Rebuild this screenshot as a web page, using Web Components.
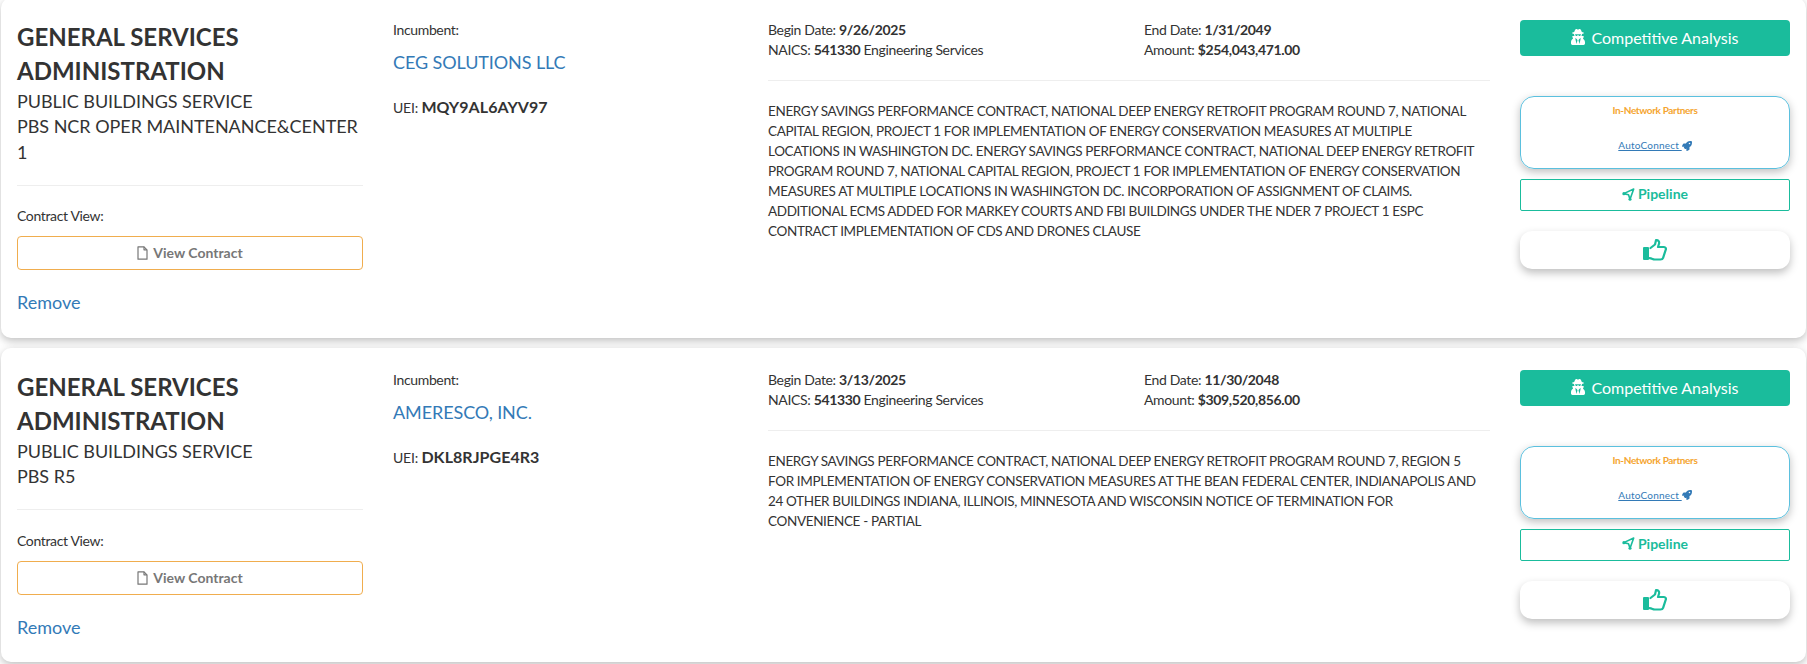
<!DOCTYPE html>
<html>
<head>
<meta charset="utf-8">
<title>Contracts</title>
<style>
    html, body {
        margin: 0;
        height: 664px;
        overflow: hidden;
        background: #fff;
        font-family: Lato, "Liberation Sans", sans-serif;
        color: #333;
    }
    contract-list {
        margin-top: -2px;
    }
</style>
</head>
<body>
<contract-list>
    <contract-card agency="GENERAL SERVICES ADMINISTRATION" incumbent="CEG SOLUTIONS LLC" uei="MQY9AL6AYV97"
        begin="9/26/2025" end="1/31/2049" naics="541330" amount="$254,043,471.00">
        <span slot="office">PUBLIC BUILDINGS SERVICE</span>
        <span slot="office">PBS NCR OPER MAINTENANCE&amp;CENTER 1</span>
        ENERGY SAVINGS PERFORMANCE CONTRACT, NATIONAL DEEP ENERGY RETROFIT PROGRAM ROUND 7, NATIONAL CAPITAL REGION, PROJECT 1 FOR IMPLEMENTATION OF ENERGY CONSERVATION MEASURES AT MULTIPLE LOCATIONS IN WASHINGTON DC. ENERGY SAVINGS PERFORMANCE CONTRACT, NATIONAL DEEP ENERGY RETROFIT PROGRAM ROUND 7, NATIONAL CAPITAL REGION, PROJECT 1 FOR IMPLEMENTATION OF ENERGY CONSERVATION MEASURES AT MULTIPLE LOCATIONS IN WASHINGTON DC. INCORPORATION OF ASSIGNMENT OF CLAIMS. ADDITIONAL ECMS ADDED FOR MARKEY COURTS AND FBI BUILDINGS UNDER THE NDER 7 PROJECT 1 ESPC CONTRACT IMPLEMENTATION OF CDS AND DRONES CLAUSE
    </contract-card>
    <contract-card agency="GENERAL SERVICES ADMINISTRATION" incumbent="AMERESCO, INC." uei="DKL8RJPGE4R3"
        begin="3/13/2025" end="11/30/2048" naics="541330" amount="$309,520,856.00">
        <span slot="office">PUBLIC BUILDINGS SERVICE</span>
        <span slot="office">PBS R5</span>
        ENERGY SAVINGS PERFORMANCE CONTRACT, NATIONAL DEEP ENERGY RETROFIT PROGRAM ROUND 7, REGION 5 FOR IMPLEMENTATION OF ENERGY CONSERVATION MEASURES AT THE BEAN FEDERAL CENTER, INDIANAPOLIS AND 24 OTHER BUILDINGS INDIANA, ILLINOIS, MINNESOTA AND WISCONSIN NOTICE OF TERMINATION FOR CONVENIENCE - PARTIAL
    </contract-card>
</contract-list>

<template id="card-template">
    <style>
        :host {
            display: block;
            background: #fff;
            border-radius: 10px;
            box-shadow: 0 3px 8px rgba(0, 0, 0, 0.25);
            margin: 0 1px;
            padding: 22px 16px 22px 16px;
            font-size: 14px;
            line-height: 20px;
            letter-spacing: -0.35px;
            color: #333;
        }
        .row {
            display: grid;
            grid-template-columns: 346px 345px 722px 270px;
            column-gap: 30px;
        }
        h2 {
            margin: 0;
            font-size: 24px;
            font-weight: 700;
            line-height: 34.3px;
            letter-spacing: 0;
        }
        .office {
            font-size: 18px;
            line-height: 25.7px;
            letter-spacing: -0.04px;
        }
        .office ::slotted(span) {
            display: block;
        }
        hr {
            border: 0;
            border-top: 1px solid #eee;
            margin: 0;
        }
        .left hr {
            margin: 19px 0 20.7px;
        }
        .contract-label {
            margin-bottom: 10px;
        }
        a {
            color: #337ab7;
            text-decoration: none;
        }
        .remove {
            display: block;
            font-size: 18px;
            line-height: 25.7px;
            margin-top: 20px;
            letter-spacing: 0;
        }
        .incumbent {
            display: block;
            font-size: 18px;
            line-height: 25.7px;
            margin-top: 10px;
            letter-spacing: -0.1px;
        }
        .uei {
            margin-top: 21px;
            letter-spacing: -0.2px;
        }
        .uei b {
            font-size: 16px;
            letter-spacing: 0.05px;
        }
        .dates {
            display: grid;
            grid-template-columns: 376px 1fr;
            height: 60px;
        }
        .desc {
            margin-top: 20px;
            max-width: 714px;
            font-size: 13.5px;
        }
        .actions {
            display: flex;
            flex-direction: column;
            letter-spacing: 0;
        }
        b {
            font-weight: 700;
        }
    </style>
    <div class="row">
        <div class="left">
            <h2 id="agency"></h2>
            <div class="office"><slot name="office"></slot></div>
            <hr>
            <div class="contract-label">Contract View:</div>
            <view-button>View Contract</view-button>
            <a class="remove" href="#">Remove</a>
        </div>
        <div>
            <div>Incumbent:</div>
            <a class="incumbent" id="incumbent" href="#"></a>
            <div class="uei">UEI: <b id="uei"></b></div>
        </div>
        <div>
            <div class="dates">
                <div>Begin Date: <b id="begin"></b><br>NAICS: <b id="naics"></b> Engineering Services</div>
                <div>End Date: <b id="end"></b><br>Amount: <b id="amount"></b></div>
            </div>
            <hr>
            <div class="desc"><slot></slot></div>
        </div>
        <div class="actions">
            <analysis-button>Competitive Analysis</analysis-button>
            <partner-box></partner-box>
            <pipeline-button>Pipeline</pipeline-button>
            <like-button></like-button>
        </div>
    </div>
</template>

<script>
    class ContractList extends HTMLElement {
        constructor() {
            super();
            this.attachShadow({ mode: "open" });
            this.shadowRoot.innerHTML = `
                <style>
                    :host {
                        display: flex;
                        flex-direction: column;
                        gap: 9.9px;
                    }
                </style>
                <slot></slot>
            `;
        }
    }

    class ContractCard extends HTMLElement {
        constructor() {
            super();
            this.attachShadow({ mode: "open" });
            const template = document.getElementById("card-template");
            this.shadowRoot.appendChild(template.content.cloneNode(true));
        }
        connectedCallback() {
            ["agency", "incumbent", "uei", "begin", "end", "naics", "amount"].forEach(name => {
                this.shadowRoot.getElementById(name).textContent = this.getAttribute(name);
            });
        }
    }

    class ViewButton extends HTMLElement {
        constructor() {
            super();
            this.attachShadow({ mode: "open" });
            this.shadowRoot.innerHTML = `
                <style>
                    :host {
                        display: flex;
                        justify-content: center;
                        align-items: center;
                        gap: 5px;
                        height: 34px;
                        box-sizing: border-box;
                        border: 1px solid #f0ad4e;
                        border-radius: 4px;
                        color: #777;
                        font-weight: 700;
                        font-size: 14px;
                        letter-spacing: 0;
                    }
                    svg { width: 11px; height: 14px; }
                </style>
                <svg viewBox="0 0 11 14" fill="none" stroke="#777" stroke-width="1.2" stroke-linejoin="round">
                    <path d="M1 .8h6l3 3v9.4H1z"/><path d="M7 .8v3h3"/>
                </svg>
                <slot></slot>
            `;
        }
    }

    class AnalysisButton extends HTMLElement {
        constructor() {
            super();
            this.attachShadow({ mode: "open" });
            this.shadowRoot.innerHTML = `
                <style>
                    :host {
                        display: flex;
                        justify-content: center;
                        align-items: center;
                        gap: 6px;
                        height: 36px;
                        background: #1abc9c;
                        border-radius: 4px;
                        color: #fff;
                        font-size: 16px;
                    }
                    svg { width: 14px; height: 16px; margin-top: -2px; }
                </style>
                <svg viewBox="0 0 448 512" fill="#fff">
                    <path d="M383.9 308.3l23.9-62.6c4-10.5-3.7-21.7-15-21.7h-58.5c11-18.9 17.8-40.6 17.8-64v-.3c39.2-7.8 64-19.1 64-31.7 0-13.3-27.3-25.1-70.1-33-9.2-32.8-27-65.8-40.6-82.8-9.5-11.9-25.9-15.6-39.5-8.8l-27.6 13.8c-9 4.5-19.6 4.5-28.6 0L182.1 3.4c-13.6-6.8-30-3.1-39.5 8.8-13.5 17-31.4 50-40.6 82.8-42.7 7.9-70 19.7-70 33 0 12.6 24.8 23.9 64 31.7v.3c0 23.4 6.8 45.1 17.8 64H56.3c-11.5 0-19.2 11.7-14.7 22.3l25.8 60.2C27.3 329.8 0 372.7 0 422.4v44.8C0 491.9 20.1 512 44.8 512h358.4c24.7 0 44.8-20.1 44.8-44.8v-44.8c0-48.4-25.8-90.4-64.1-114.1zM176 480l-41.6-192 49.6 32 24 40-32 120zm96 0l-32-120 24-40 49.6-32L272 480zm41.7-298.5c-3.9 11.9-7 24.6-16.5 33.4-10.1 9.3-48 22.4-64-25-2.8-8.4-15.4-8.4-18.3 0-17 50.2-56 32.4-64 25-9.5-8.8-12.7-21.5-16.5-33.4-.8-2.5-6.3-5.7-6.3-5.8v-10.8c28.3 3.6 61 5.8 96 5.8s67.7-2.1 96-5.8v10.8c-.1.1-5.6 3.2-6.4 5.8z"/>
                </svg>
                <slot></slot>
            `;
        }
    }

    class PartnerBox extends HTMLElement {
        constructor() {
            super();
            this.attachShadow({ mode: "open" });
            this.shadowRoot.innerHTML = `
                <style>
                    :host {
                        display: block;
                        box-sizing: border-box;
                        height: 73px;
                        margin-top: 40px;
                        padding-top: 6px;
                        border: 1px solid #5bc0de;
                        border-radius: 14px;
                        box-shadow: 0 3px 8px rgba(0, 0, 0, 0.25);
                        text-align: center;
                        font-size: 10px;
                        line-height: 15px;
                    }
                    .title {
                        color: #f5a52f;
                        font-weight: 700;
                        letter-spacing: -0.35px;
                    }
                    .connect {
                        margin-top: 20px;
                        display: flex;
                        justify-content: center;
                        align-items: center;
                    }
                    a {
                        color: #337ab7;
                        font-weight: 400;
                        letter-spacing: 0.2px;
                        white-space: pre;
                    }
                    svg { width: 10px; height: 10px; }
                </style>
                <div class="title">In-Network Partners</div>
                <div class="connect">
                    <a href="#">AutoConnect </a>
                    <svg viewBox="0 0 512 512" fill="#337ab7">
                        <path d="M505.12019,19.09375c-1.18945-5.53125-6.65819-11-12.207-12.1875C460.716,0,435.507,0,410.40747,0,307.17523,0,245.26909,55.20312,199.05238,128H94.83772c-16.34763.01562-35.55658,11.875-42.88664,26.48438L2.51562,253.29688A28.4,28.4,0,0,0,0,264a24.00867,24.00867,0,0,0,24.00582,24H127.81618l-22.47457,22.46875c-11.36521,11.36133-12.99607,32.25781,0,45.25L156.24582,406.625c11.15623,11.1875,32.15619,13.15625,45.27726,0l22.47457-22.46875V488a24.00867,24.00867,0,0,0,24.00581,24,28.55934,28.55934,0,0,0,10.707-2.51562l98.72834-49.39063c14.62888-7.29687,26.50776-26.5,26.50776-42.85937V312.79688c72.59753-46.3125,128.03493-108.40626,128.03493-211.09376C512.07526,76.5,512.07526,51.29688,505.12019,19.09375ZM384.04033,168A40,40,0,1,1,424.05,128,40.02322,40.02322,0,0,1,384.04033,168Z"/>
                    </svg>
                </div>
            `;
        }
    }

    class PipelineButton extends HTMLElement {
        constructor() {
            super();
            this.attachShadow({ mode: "open" });
            this.shadowRoot.innerHTML = `
                <style>
                    :host {
                        display: flex;
                        justify-content: center;
                        align-items: center;
                        gap: 3px;
                        box-sizing: border-box;
                        height: 32px;
                        margin-top: 10px;
                        padding-bottom: 2px;
                        border: 1px solid #1abc9c;
                        border-radius: 2px;
                        color: #1abc9c;
                        font-weight: 700;
                        font-size: 14px;
                    }
                    svg { width: 13px; height: 13px; }
                </style>
                <svg viewBox="0 0 12 12" fill="#1abc9c" stroke="#1abc9c">
                    <path d="M1.6 5.2 10.8 1 7.4 10.4 6 6.2z" fill="none" stroke-width="1.5" stroke-linejoin="round"/>
                    <circle cx="1.7" cy="5.2" r="1.4" stroke="none"/>
                    <circle cx="7.4" cy="10.3" r="1.4" stroke="none"/>
                </svg>
                <slot></slot>
            `;
        }
    }

    class LikeButton extends HTMLElement {
        constructor() {
            super();
            this.attachShadow({ mode: "open" });
            this.shadowRoot.innerHTML = `
                <style>
                    :host {
                        display: flex;
                        justify-content: center;
                        align-items: center;
                        height: 38px;
                        margin-top: 20px;
                        border-radius: 12px;
                        box-shadow: 0 4px 8px rgba(0, 0, 0, 0.25);
                    }
                    svg { width: 24px; height: 22px; }
                </style>
                <svg viewBox="0 0 24 22" fill="none" stroke="#1abc9c" stroke-width="2.2" stroke-linejoin="round" stroke-linecap="round">
                    <rect x="0" y="8" width="6" height="13" rx="1" fill="#1abc9c" stroke="none"/>
                    <path d="M7.5 9 12 5.5 13 1.2c2.4-.3 3.6 1.6 3 3.6L15 8h6c1.6 0 2.4 1.8 1.6 3.2l-2.5 7.6c-.4 1.2-1.4 1.7-2.6 1.7h-5.8c-1.8 0-2.6-1.2-5.2-1.4"/>
                </svg>
            `;
        }
    }

    customElements.define("contract-list", ContractList);
    customElements.define("contract-card", ContractCard);
    customElements.define("view-button", ViewButton);
    customElements.define("analysis-button", AnalysisButton);
    customElements.define("partner-box", PartnerBox);
    customElements.define("pipeline-button", PipelineButton);
    customElements.define("like-button", LikeButton);
</script>
</body>
</html>
